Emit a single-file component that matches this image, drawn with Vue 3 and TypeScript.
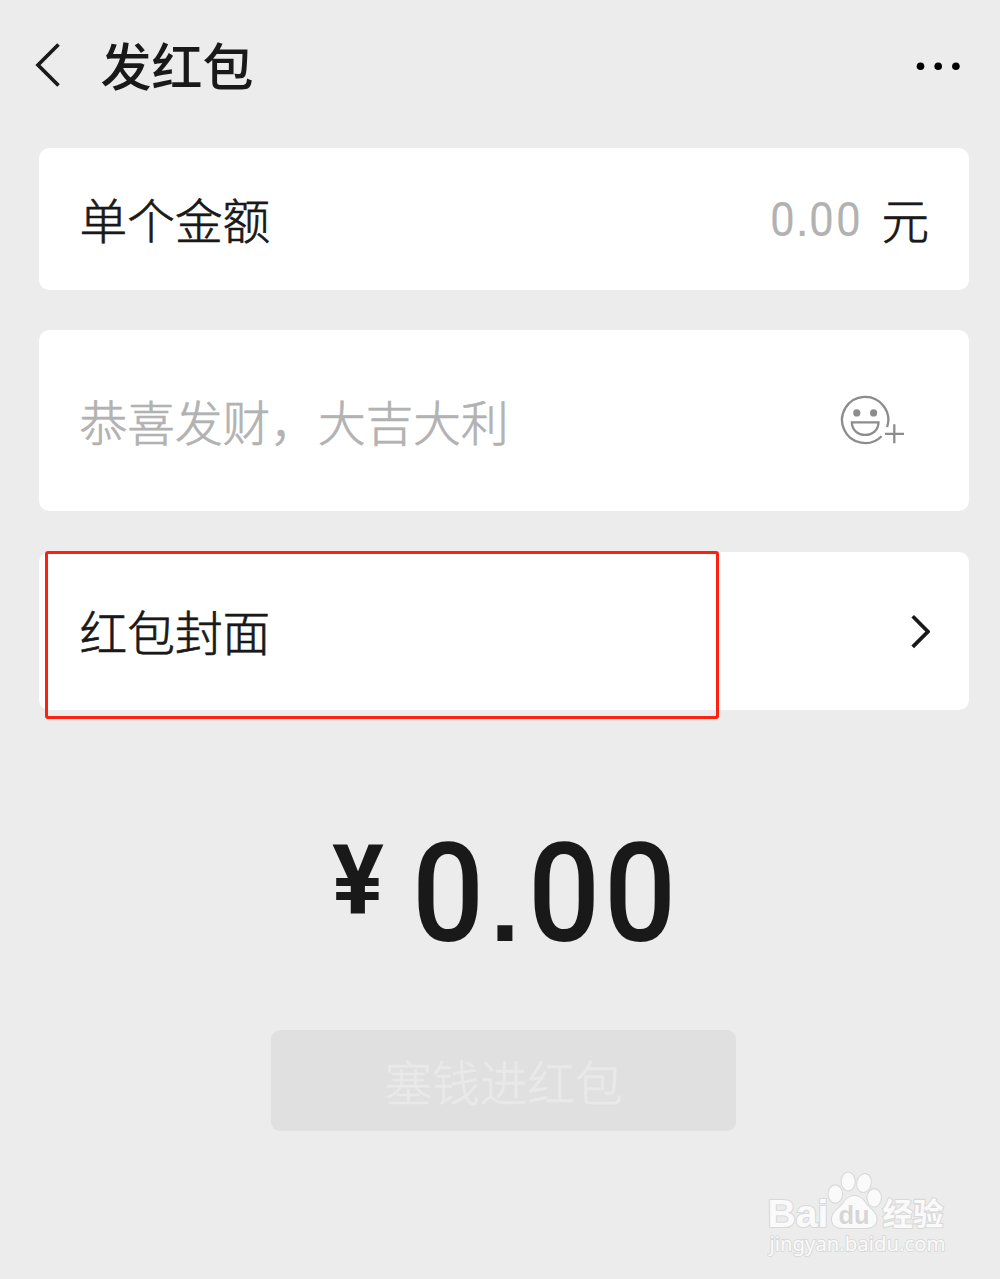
<script setup lang="ts">
import { ref } from 'vue'

const title = '发红包'
const amount = ref('0.00')
const greeting = '恭喜发财，大吉大利'
</script>

<template>
  <main class="page">
    <header class="bar">
      <svg class="back" width="30" height="50" viewBox="0 0 30 50">
        <path d="M25.5 4.5 5 25l20.5 20.5" />
      </svg>
      <h1 class="title">{{ title }}</h1>
      <svg class="more" width="46" height="12" viewBox="0 0 46 12">
        <circle cx="5.5" cy="7.2" r="3.8" />
        <circle cx="23.2" cy="7.2" r="3.8" />
        <circle cx="40.9" cy="7.2" r="3.8" />
      </svg>
    </header>

    <section class="card amount">
      <span class="label">单个金额</span>
      <span class="value"><span v-for="(ch, i) in amount" :key="i" :class="ch === '.' ? 'point' : 'digit'">{{ ch }}</span></span>
      <span class="unit">元</span>
    </section>

    <section class="card greeting">
      <span class="label hint">{{ greeting }}</span>
      <svg class="emoji" width="66" height="52" viewBox="0 0 66 52">
        <path d="M48.1 32.2A23.1 23.1 0 1 0 42.6 41.2" />
        <path d="M12.9 27.3H39.5C39.5 35.2 33.4 39.9 26.2 39.9S12.9 35.2 12.9 27.3Z" />
        <path d="M55.3 29.3v19M46 38.8h19" />
        <circle class="eye" cx="17.8" cy="17.9" r="3.6" />
        <circle class="eye" cx="34.6" cy="17.9" r="3.6" />
      </svg>
    </section>

    <section class="card cover">
      <span class="label">红包封面</span>
      <svg class="next" width="22" height="38" viewBox="0 0 22 38">
        <path d="M4.700 4.300 20 19.600 4.700 34.900" />
      </svg>
      <span class="marker"></span>
    </section>

    <div class="total">
      <span class="yen">¥</span>
      <span class="sum"><span v-for="(ch, i) in amount" :key="i" :class="ch === '.' ? 'point' : 'digit'">{{ ch }}</span></span>
    </div>

    <button class="submit">塞钱进红包</button>

    <footer class="watermark">
      <svg width="190" height="96" viewBox="0 0 190 96">
        <g class="mark">
          <text class="bai" x="6.5" y="62" textLength="61" lengthAdjust="spacingAndGlyphs">Bai</text>
          <ellipse cx="74.3" cy="29" rx="6.8" ry="8.6" />
          <ellipse cx="87.2" cy="16.500" rx="6.500" ry="9" />
          <ellipse cx="103" cy="18" rx="6.700" ry="9" transform="rotate(12 103 18)" />
          <ellipse cx="113.200" cy="32.800" rx="6.700" ry="8.600" />
          <path d="M93.500 31C99.500 31 102.500 35 105 39C108 43.500 114.500 46 115.500 53C116 60 111 63 104.500 63H82C75.500 63 70.500 60 71 53C72 46 78.500 43.500 82 39C84.500 35 87.500 31 93.500 31Z" />
          <text class="cn" x="121.500" y="59.500" textLength="61" lengthAdjust="spacingAndGlyphs">经验</text>
          <text class="url" x="8.500" y="85.500" textLength="176" lengthAdjust="spacingAndGlyphs">jingyan.baidu.com</text>
        </g>
        <text class="du" x="77.500" y="58.500" textLength="31" lengthAdjust="spacingAndGlyphs">du</text>
      </svg>
    </footer>
  </main>
</template>

<style>
body {
  margin: 0;
  background: #ececec;
}
</style>

<style scoped>
.page {
  box-sizing: border-box;
  width: 1000px;
  height: 1279px;
  overflow: hidden;
  display: flex;
  flex-direction: column;
  background: #ececec;
  color: #191919;
  font-family: 'Noto Sans CJK SC', sans-serif;
}
svg {
  display: block;
  flex: none;
}
.bar {
  display: flex;
  align-items: center;
  height: 130px;
  margin-bottom: 18px;
  padding: 0 37px 0 33px;
}
.back,
.next {
  fill: none;
  stroke: #191919;
  stroke-width: 3.7;
}
.title {
  margin: -3px auto 0 37.5px;
  font-size: 51px;
  line-height: 70px;
  font-weight: 500;
}
.more {
  fill: #000;
  margin-right: 2px;
}
.card {
  position: relative;
  box-sizing: border-box;
  display: flex;
  align-items: center;
  margin: 0 31px 0 38.5px;
  padding: 0 40px 0 41px;
  border-radius: 10px;
  background: #fff;
}
.amount {
  height: 141.5px;
  margin-bottom: 40.5px;
}
.greeting {
  height: 181px;
  margin-bottom: 40.5px;
  padding-right: 64px;
}
.cover {
  height: 158.5px;
  padding-right: 39px;
}
.label {
  margin-right: auto;
  font-size: 47.7px;
  line-height: 70px;
  font-weight: 300;
  white-space: nowrap;
  -webkit-text-stroke: 0.7px currentColor;
}
.hint {
  color: #b2b2b2;
}
.value {
  display: flex;
  align-items: baseline;
  margin: 2px 20.5px 0 0;
  color: #b2b2b2;
  font: 400 48px/70px Roboto, sans-serif;
}
.digit,
.point {
  display: block;
  text-align: center;
}
.digit {
  transform: scaleX(0.92);
}
.point {
  font-family: 'Liberation Sans', sans-serif;
}
.value .digit {
  width: 26.3px;
}
.value .point {
  width: 12.8px;
}
.unit {
  font-size: 47.6px;
  line-height: 70px;
  font-weight: 300;
  -webkit-text-stroke: 0.7px currentColor;
}
.emoji {
  fill: none;
  stroke: #8c8c8c;
  stroke-width: 2.3;
}
.eye {
  fill: #8c8c8c;
  stroke: none;
}
.marker {
  position: absolute;
  left: 6.5px;
  top: -1px;
  box-sizing: border-box;
  width: 674px;
  height: 168.5px;
  border: 3px solid #ff2110;
  border-radius: 3px;
}
.total {
  display: flex;
  align-items: flex-start;
  box-sizing: border-box;
  height: 220px;
  margin: 100px 0 0 332px;
}
.yen {
  width: 77px;
  font: 700 97px/140px Roboto, sans-serif;
}
.sum {
  display: flex;
  align-items: baseline;
  margin-top: 12px;
  font: 500 138px/144px Roboto, sans-serif;
}
.sum .digit {
  width: 76.5px;
}
.sum .point {
  width: 39px;
  font-size: 106px;
  font-weight: 700;
}
.submit {
  width: 465px;
  height: 101px;
  margin: 0 0 0 271px;
  padding: 0;
  border: 0;
  border-radius: 9px;
  background: #e0e0e0;
  color: #e9e9e9;
  font: 300 47.6px/100px 'Noto Sans CJK SC', sans-serif;
  -webkit-text-stroke: 0.6px currentColor;
}
.watermark {
  margin: 34px 0 0 761px;
}
.mark {
  fill: #fafafa;
  stroke: #d9d9d9;
  stroke-width: 2.2;
  paint-order: stroke;
}
.bai {
  font: 700 38.5px 'Liberation Sans', sans-serif;
}
.cn {
  font: 700 31px 'Noto Sans CJK SC', sans-serif;
}
.url {
  font: 400 20px 'Noto Sans', sans-serif;
  stroke-width: 1.8;
}
.du {
  fill: #d6d6d6;
  font: 700 25px 'Liberation Sans', sans-serif;
}
</style>
